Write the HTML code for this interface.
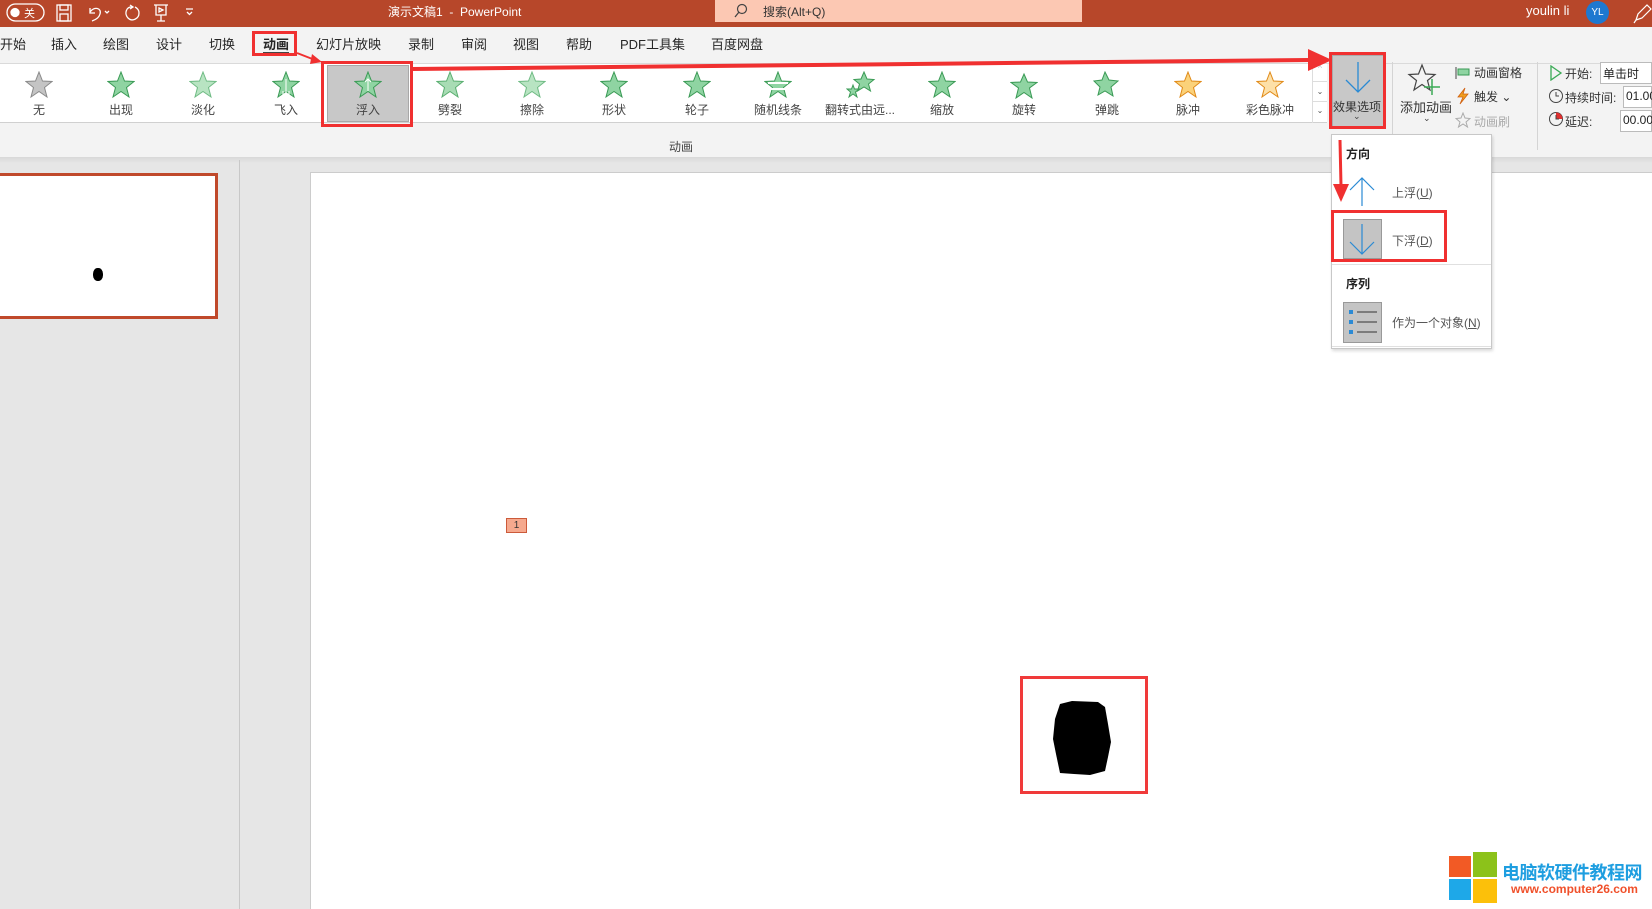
<!DOCTYPE html>
<html><head><meta charset="utf-8"><style>
*{margin:0;padding:0;box-sizing:border-box}
body{width:1652px;height:909px;overflow:hidden;position:relative;background:#e6e6e6;font-family:"Liberation Sans","Noto Sans CJK SC",sans-serif;font-size:12px;color:#333}
.a{position:absolute}
.t{position:absolute;white-space:nowrap}
.tab{position:absolute;top:34px;font-size:13px;color:#262626}
.gi{position:absolute;top:64px;width:82px;height:58px;text-align:center}
.gi svg{position:absolute;left:27px;top:7px}
.gi span{position:absolute;left:0;right:0;top:37px;font-size:12px;color:#444}
</style></head><body>
<div class="a" style="left:0;top:0;width:1652px;height:27px;background:#b7472a"></div>
<div class="a" style="left:715px;top:0;width:367px;height:22px;background:#fcc8b3"></div>
<svg class="a" style="left:733px;top:3px" width="16" height="16"><circle cx="9" cy="6" r="4.5" fill="none" stroke="#444" stroke-width="1.2"/><line x1="6" y1="9" x2="2" y2="14" stroke="#444" stroke-width="1.3"/></svg>
<div class="t" style="left:763px;top:3px;font-size:12px;color:#333">搜索(Alt+Q)</div>
<div class="t" style="left:388px;top:3px;font-size:12px;color:#fff">演示文稿1 &nbsp;-&nbsp; PowerPoint</div>
<svg class="a" style="left:0;top:0" width="210" height="27" fill="none" stroke="#fff" stroke-width="1.3">
<rect x="7" y="4" width="37" height="17" rx="8.5"/><circle cx="15" cy="12.5" r="4" fill="#fff"/>
<text x="24" y="17" fill="#fff" stroke="none" font-size="11" font-family="Noto Sans CJK SC">关</text>
<rect x="57" y="5" width="14" height="16"/><rect x="60" y="5" width="8" height="5"/><rect x="60" y="14" width="8" height="7"/>
<path d="M90 8 L90 13 L95 13 M90 12 C94 6 102 8 100 14 C99 18 95 20 92 21"/>
<path d="M105 11 l2 2 l2 -2"/>
<path d="M130 5 l3 2 l-3 2 M133 7 C126 6 124 14 128 18 C132 22 139 19 139 13 C139 10 137 8 135 7"/>
<path d="M154 5 h14 M156 5 v10 h10 v-10 M161 15 v6 M157 21 h8 M159 8 l4 2 l-4 2z"/>
<path d="M186 9 h7 M187 12 l2.5 2.5 l2.5 -2.5"/>
</svg>
<div class="t" style="left:1526px;top:3px;font-size:13px;color:#fff">youlin li</div>
<div class="a" style="left:1586px;top:1px;width:23px;height:23px;border-radius:50%;background:#1e78d0;color:#fff;font-size:10px;text-align:center;line-height:23px">YL</div>
<svg class="a" style="left:1632px;top:2px" width="20" height="22" fill="none" stroke="#fff" stroke-width="1.2"><path d="M4 18 l2 -6 l9 -9 l4 4 l-9 9z M4 18 l-2 3"/></svg>
<div class="a" style="left:0;top:27px;width:1652px;height:130px;background:#f3f3f3"></div>
<div class="a" style="left:0;top:63px;width:1652px;height:1px;background:#dadada"></div>
<div class="tab" style="left:0">开始</div>
<div class="tab" style="left:51px">插入</div>
<div class="tab" style="left:103px">绘图</div>
<div class="tab" style="left:156px">设计</div>
<div class="tab" style="left:209px">切换</div>
<div class="tab" style="left:263px;font-weight:bold">动画</div>
<div class="a" style="left:263px;top:52px;width:26px;height:2px;background:#444"></div>
<div class="a" style="left:252px;top:31px;width:45px;height:25px;border:3px solid #f03030"></div>
<div class="tab" style="left:316px">幻灯片放映</div>
<div class="tab" style="left:408px">录制</div>
<div class="tab" style="left:461px">审阅</div>
<div class="tab" style="left:513px">视图</div>
<div class="tab" style="left:566px">帮助</div>
<div class="tab" style="left:620px">PDF工具集</div>
<div class="tab" style="left:711px">百度网盘</div>
<div class="a" style="left:0;top:64px;width:1327px;height:59px;background:#fff;border-bottom:1px solid #d0d0d0"></div>
<div class="a" style="left:1312px;top:64px;width:15px;height:59px;border-left:1px solid #ddd;font-size:8px;color:#555;text-align:center"><div style="height:18px;border-bottom:1px solid #ddd;color:#bbb">^</div><div style="height:20px;border-bottom:1px solid #ddd;line-height:20px">⌄</div><div style="line-height:18px">⌄</div></div>
<div class="a" style="left:327px;top:65px;width:82px;height:57px;background:#c8c8c8;border:1px solid #a8a8a8"></div>
<div class="a" style="left:321px;top:61px;width:92px;height:66px;border:3px solid #f03030"></div>
<div class="gi" style="left:-2px"><svg width="28" height="28"><polygon points="14,1 17.5,10 27,10.5 19.5,16.5 22,26 14,20.5 6,26 8.5,16.5 1,10.5 10.5,10" fill="#c4c4c4" stroke="#8a8a8a"/></svg><span>无</span></div>
<div class="gi" style="left:80px"><svg width="28" height="28"><polygon points="14,1 17.5,10 27,10.5 19.5,16.5 22,26 14,20.5 6,26 8.5,16.5 1,10.5 10.5,10" fill="#8fd4a2" stroke="#3a9a55"/></svg><span>出现</span></div>
<div class="gi" style="left:162px"><svg width="28" height="28"><polygon points="14,1 17.5,10 27,10.5 19.5,16.5 22,26 14,20.5 6,26 8.5,16.5 1,10.5 10.5,10" fill="#b8e4c2" stroke="#6fbb84"/></svg><span>淡化</span></div>
<div class="gi" style="left:245px"><svg width="28" height="28"><polygon points="14,1 17.5,10 27,10.5 19.5,16.5 22,26 14,20.5 6,26 8.5,16.5 1,10.5 10.5,10" fill="#8fd4a2" stroke="#3a9a55"/><path d="M14 8v18 M11 20v6 M17 20v6" stroke="#fff"/></svg><span>飞入</span></div>
<div class="gi" style="left:327px"><svg width="28" height="28"><polygon points="14,1 17.5,10 27,10.5 19.5,16.5 22,26 14,20.5 6,26 8.5,16.5 1,10.5 10.5,10" fill="#8fd4a2" stroke="#3a9a55"/><path d="M14 8v12 M11 11l3-3 3 3" stroke="#fff" fill="none"/></svg><span>浮入</span></div>
<div class="gi" style="left:409px"><svg width="28" height="28"><polygon points="14,1 17.5,10 27,10.5 19.5,16.5 22,26 14,20.5 6,26 8.5,16.5 1,10.5 10.5,10" fill="#a8dcb4" stroke="#5aae70"/></svg><span>劈裂</span></div>
<div class="gi" style="left:491px"><svg width="28" height="28"><polygon points="14,1 17.5,10 27,10.5 19.5,16.5 22,26 14,20.5 6,26 8.5,16.5 1,10.5 10.5,10" fill="#b8e4c2" stroke="#6fbb84"/></svg><span>擦除</span></div>
<div class="gi" style="left:573px"><svg width="28" height="28"><polygon points="14,1 17.5,10 27,10.5 19.5,16.5 22,26 14,20.5 6,26 8.5,16.5 1,10.5 10.5,10" fill="#8fd4a2" stroke="#3a9a55"/></svg><span>形状</span></div>
<div class="gi" style="left:656px"><svg width="28" height="28"><polygon points="14,1 17.5,10 27,10.5 19.5,16.5 22,26 14,20.5 6,26 8.5,16.5 1,10.5 10.5,10" fill="#8fd4a2" stroke="#3a9a55"/></svg><span>轮子</span></div>
<div class="gi" style="left:737px"><svg width="28" height="28"><polygon points="14,1 17.5,10 27,10.5 19.5,16.5 22,26 14,20.5 6,26 8.5,16.5 1,10.5 10.5,10" fill="#8fd4a2" stroke="#3a9a55"/><path d="M4 12h20 M6 18h16" stroke="#fff" stroke-width="2"/></svg><span>随机线条</span></div>
<div class="gi" style="left:819px"><svg width="30" height="28"><polygon points="18,1 21,8 28,8.5 22.5,13 24.5,20 18,16 11.5,20 13.5,13 8,8.5 15,8" fill="#8fd4a2" stroke="#3a9a55"/><polygon points="7,14 8.5,18 13,18 9.5,21 11,26 7,23 3,26 4.5,21 1,18 5.5,18" fill="#8fd4a2" stroke="#3a9a55"/></svg><span>翻转式由远...</span></div>
<div class="gi" style="left:901px"><svg width="28" height="28"><polygon points="14,1 17.5,10 27,10.5 19.5,16.5 22,26 14,20.5 6,26 8.5,16.5 1,10.5 10.5,10" fill="#8fd4a2" stroke="#3a9a55"/></svg><span>缩放</span></div>
<div class="gi" style="left:983px"><svg width="28" height="28"><polygon points="14,3 17.5,11 27,11.5 19.5,17 22,27 14,21.5 6,27 8.5,17 1,11.5 10.5,11" fill="#8fd4a2" stroke="#3a9a55"/></svg><span>旋转</span></div>
<div class="gi" style="left:1066px"><svg width="28" height="28"><polygon points="12,1 16,9 25,10 18,16 20,25 12,20 5,24 7,16 1,10 9,9" fill="#8fd4a2" stroke="#3a9a55"/></svg><span>弹跳</span></div>
<div class="gi" style="left:1147px"><svg width="28" height="28"><polygon points="14,1 17.5,10 27,10.5 19.5,16.5 22,26 14,20.5 6,26 8.5,16.5 1,10.5 10.5,10" fill="#fbd27a" stroke="#e08a18"/></svg><span>脉冲</span></div>
<div class="gi" style="left:1229px"><svg width="28" height="28"><polygon points="14,1 17.5,10 27,10.5 19.5,16.5 22,26 14,20.5 6,26 8.5,16.5 1,10.5 10.5,10" fill="#fde0a8" stroke="#e08a18"/></svg><span>彩色脉冲</span></div>
<div class="t" style="left:669px;top:138px;font-size:12px;color:#444">动画</div>
<div class="a" style="left:1332px;top:55px;width:52px;height:73px;background:#c8c8c8;border:1px solid #aaa"></div>
<svg class="a" style="left:1343px;top:60px" width="30" height="36" fill="none" stroke="#2a8ad4" stroke-width="1.3"><path d="M15 2v30 M3 20l12 12 12-12"/></svg>
<div class="t" style="left:1333px;top:98px;font-size:12px;color:#333">效果选项</div>
<div class="t" style="left:1353px;top:111px;font-size:9px;color:#444">⌄</div>
<div class="a" style="left:1329px;top:52px;width:57px;height:77px;border:3px solid #f03030"></div>
<div class="a" style="left:1392px;top:62px;width:1px;height:88px;background:#d4d4d4"></div>
<svg class="a" style="left:1407px;top:63px" width="34" height="32" fill="none" stroke="#444" stroke-width="1.2"><polygon points="15,2 18.5,11 28,11.5 20.5,17.5 23,27 15,21.5 7,27 9.5,17.5 2,11.5 11.5,11"/><path d="M25 16v16 M17 24h16" stroke="#3aaa55" stroke-width="1.5"/></svg>
<div class="t" style="left:1400px;top:97px;font-size:13px;color:#333">添加动画</div>
<div class="t" style="left:1423px;top:113px;font-size:9px;color:#444">⌄</div>
<svg class="a" style="left:1455px;top:66px" width="16" height="14"><rect x="3" y="3" width="11" height="6" fill="#8fd4a2" stroke="#3a9a55"/><path d="M1 1v12" stroke="#444"/></svg>
<div class="t" style="left:1474px;top:64px;font-size:12px;color:#333">动画窗格</div>
<svg class="a" style="left:1456px;top:87px" width="14" height="18"><path d="M9 1L2 10h5l-3 7 8-10H7z" fill="#f0a020" stroke="#d06010" stroke-width=".8"/></svg>
<div class="t" style="left:1474px;top:88px;font-size:12px;color:#333">触发 ⌄</div>
<svg class="a" style="left:1455px;top:112px" width="16" height="16" fill="none" stroke="#aaa"><polygon points="8,1 10,6 15,6.5 11,10 12.5,15 8,12 3.5,15 5,10 1,6.5 6,6"/></svg>
<div class="t" style="left:1474px;top:113px;font-size:12px;color:#aaa">动画刷</div>
<div class="a" style="left:1537px;top:62px;width:1px;height:88px;background:#d4d4d4"></div>
<svg class="a" style="left:1549px;top:65px" width="14" height="16" fill="none" stroke="#3aaa55" stroke-width="1.3"><path d="M2 1l10 7-10 7z"/></svg>
<div class="t" style="left:1565px;top:65px;font-size:12px;color:#333">开始:</div>
<div class="a" style="left:1600px;top:62px;width:52px;height:22px;background:#fff;border:1px solid #bbb"></div>
<div class="t" style="left:1603px;top:65px;font-size:12px;color:#222">单击时</div>
<svg class="a" style="left:1548px;top:88px" width="16" height="16" fill="none" stroke="#444"><circle cx="8" cy="8" r="6.5"/><path d="M8 4v4h3"/></svg>
<div class="t" style="left:1565px;top:89px;font-size:12px;color:#333">持续时间:</div>
<div class="a" style="left:1623px;top:86px;width:29px;height:22px;background:#fff;border:1px solid #bbb"></div>
<div class="t" style="left:1626px;top:89px;font-size:12px;color:#222">01.00</div>
<svg class="a" style="left:1548px;top:111px" width="16" height="16" fill="none" stroke="#444"><circle cx="8" cy="8" r="6.5"/><path d="M8 1.5A6.5 6.5 0 0 1 14.5 8H8z" fill="#e03030" stroke="none"/><path d="M8 4v4h3"/></svg>
<div class="t" style="left:1565px;top:113px;font-size:12px;color:#333">延迟:</div>
<div class="a" style="left:1620px;top:110px;width:32px;height:22px;background:#fff;border:1px solid #bbb"></div>
<div class="t" style="left:1623px;top:113px;font-size:12px;color:#222">00.00</div>
<div class="a" style="left:0;top:157px;width:1652px;height:6px;background:linear-gradient(#d8d8d8,#e6e6e6)"></div>
<div class="a" style="left:239px;top:160px;width:1px;height:749px;background:#c8c8c8"></div>
<div class="a" style="left:0;top:173px;width:218px;height:146px;background:#fff;border:3px solid #c0492b;border-left:none"></div>
<div class="a" style="left:93px;top:268px;width:10px;height:13px;border-radius:45%;background:#000"></div>
<div class="a" style="left:310px;top:172px;width:1342px;height:737px;background:#fff;border-left:1px solid #ccc;border-top:1px solid #ccc"></div>
<div class="a" style="left:506px;top:518px;width:21px;height:15px;background:#f6a98e;border:1px solid #cc5a3a;font-size:10px;text-align:center;line-height:13px;color:#333">1</div>
<div class="a" style="left:1020px;top:676px;width:128px;height:118px;border:3px solid #f03a3a"></div>
<svg class="a" style="left:1050px;top:699px" width="64" height="80"><path d="M10 5 L22 2 L48 3 L55 8 L58 25 L61 43 L58 58 L55 72 L40 76 L24 75 L10 74 L6 55 L3 40 L5 20 Z" fill="#000"/></svg>
<div class="a" style="left:1331px;top:134px;width:161px;height:215px;background:#fff;border:1px solid #c8c8c8;box-shadow:1px 2px 3px rgba(0,0,0,.15)"></div>
<div class="t" style="left:1346px;top:145px;font-size:12px;font-weight:bold;color:#222">方向</div>
<svg class="a" style="left:1347px;top:176px" width="30" height="32" fill="none" stroke="#2a8ad4" stroke-width="1.2"><path d="M15 30V2 M3 14L15 2l12 12"/></svg>
<div class="t" style="left:1392px;top:184px;font-size:12px;color:#555">上浮(<u>U</u>)</div>
<div class="a" style="left:1343px;top:219px;width:39px;height:40px;background:#c4c4c4;border:1px solid #999"></div>
<svg class="a" style="left:1347px;top:222px" width="30" height="34" fill="none" stroke="#2a8ad4" stroke-width="1.2"><path d="M15 2v30 M3 20l12 12 12-12"/></svg>
<div class="t" style="left:1392px;top:232px;font-size:12px;color:#555">下浮(<u>D</u>)</div>
<div class="a" style="left:1331px;top:210px;width:116px;height:52px;border:3px solid #f03030"></div>
<div class="a" style="left:1332px;top:264px;width:159px;height:1px;background:#e0e0e0"></div>
<div class="t" style="left:1346px;top:275px;font-size:12px;font-weight:bold;color:#222">序列</div>
<div class="a" style="left:1343px;top:302px;width:39px;height:41px;background:#c4c4c4;border:1px solid #999"></div>
<svg class="a" style="left:1345px;top:304px" width="36" height="38"><g fill="#2a8ad4"><rect x="4" y="6" width="4" height="4"/><rect x="4" y="16" width="4" height="4"/><rect x="4" y="26" width="4" height="4"/></g><g stroke="#333"><path d="M12 8h20 M12 18h20 M12 28h20"/></g></svg>
<div class="t" style="left:1392px;top:314px;font-size:12px;color:#555">作为一个对象(<u>N</u>)</div>
<div class="a" style="left:1332px;top:346px;width:159px;height:1px;background:#e0e0e0"></div>
<svg class="a" style="left:0;top:0" width="1652" height="300">
<path d="M412 69 L1308 60" stroke="#f03030" stroke-width="4"/>
<polygon points="1308,49 1332,60 1308,71" fill="#f03030"/>
<path d="M297 53 L315 60" stroke="#f03030" stroke-width="2"/>
<polygon points="312,54 322,62 310,64" fill="#f03030"/>
<path d="M1340 140 L1341 186" stroke="#f03030" stroke-width="3"/>
<polygon points="1333,184 1349,184 1341,202" fill="#f03030"/>
</svg>
<div class="a" style="left:1449px;top:856px;width:22px;height:21px;background:#f25a25"></div>
<div class="a" style="left:1473px;top:852px;width:24px;height:25px;background:#8cc21a"></div>
<div class="a" style="left:1449px;top:879px;width:22px;height:21px;background:#1ea8e8"></div>
<div class="a" style="left:1473px;top:879px;width:24px;height:24px;background:#fcc00a"></div>
<div class="t" style="left:1502px;top:859px;font-size:18px;font-weight:bold;color:#1e9ee0;letter-spacing:-0.5px">电脑软硬件教程网</div>
<div class="t" style="left:1511px;top:882px;font-size:12px;font-weight:bold;color:#f0502a">www.computer26.com</div>
</body></html>
